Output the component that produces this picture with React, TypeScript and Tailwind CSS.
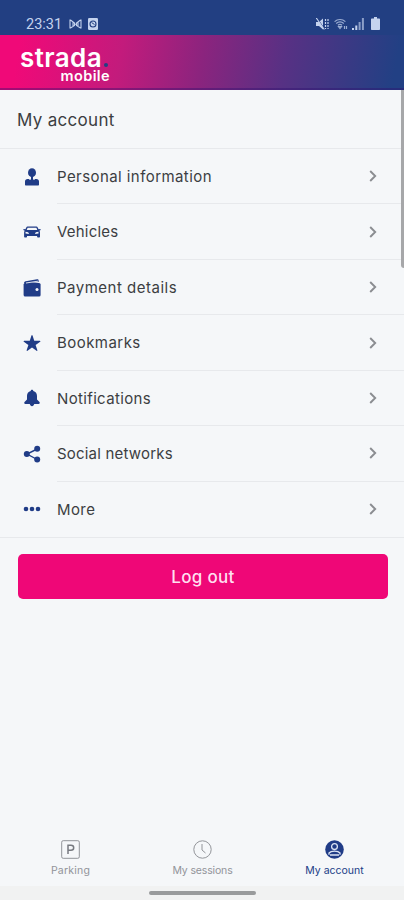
import { ReactNode } from "react";
import { IoStar } from "react-icons/io5";

interface MenuItem {
  label: string;
  icon: ReactNode;
  tracking: string;
}

function PersonIcon() {
  return (
    <svg width="16" height="18" viewBox="0 0 16 18" fill="currentColor">
      <ellipse cx="8" cy="4.7" rx="4" ry="4.4" />
      <path d="M7 8h2v4H7z" />
      <path d="M1 16.400v-3c0-1.500 1-2.400 2.600-2.400h1.200l1.200 1 1-.8h2l1 .8 1.200-1h1.200c1.600 0 2.600.9 2.600 2.400v3c0 .6-.4 1-1 1H2c-.6 0-1-.4-1-1z" />
    </svg>
  );
}

function CarIcon() {
  return (
    <svg width="18" height="14" viewBox="0 0 18 14" fill="currentColor">
      <path
        fillRule="evenodd"
        d="M4.600 1.500h8.800c.6 0 1.100.3 1.300.9l.9 1.900 1.800-.4.300 1.100-1.400.7c.5.500.7 1.100.7 1.800v4.300c0 .4-.3.700-.7.700h-1.500c-.4 0-.7-.3-.7-.7V10.900H4v.9c0 .4-.3.700-.7.700H1.800c-.4 0-.7-.3-.7-.7V7.500c0-.7.2-1.300.7-1.800L.3 5l.3-1.100 1.800.4.900-1.900c.2-.6.700-.9 1.300-.9zM4.600 2.700l-.9 2.200h10.600l-.9-2.200zM2.500 6.800v1.600l3.400.6c0-1.300-1.200-2.200-3.400-2.200zM15.500 6.800v1.600l-3.400.6c0-1.300 1.200-2.200 3.400-2.200z"
      />
    </svg>
  );
}

function WalletIcon() {
  return (
    <svg width="18" height="18" viewBox="0 0 18 18">
      <path d="M1 4.200c0-1 .6-1.800 1.700-2L14 .3c1-.2 1.800.4 1.800 1.400v1.200L2 4.800z" fill="currentColor" />
      <rect x=".6" y="4" width="17" height="13.500" rx="1.600" fill="currentColor" />
      <path d="M3 4l12.500-1.900" stroke="#f5f7f9" strokeWidth=".9" />
      <circle cx="14" cy="10.500" r="1.500" fill="#f5f7f9" />
    </svg>
  );
}

function BellIcon() {
  return (
    <svg width="18" height="18" viewBox="0 0 18 18" fill="currentColor">
      <path d="M9 .8c.7 0 1.300.500 1.300 1.200 2.500.6 3.700 2.500 3.700 5v3.500l2.500 2.600c.6.800.2 1.900-.8 1.900H2.300c-1 0-1.400-1.100-.8-1.900L4 10.500V7c0-2.500 1.200-4.400 3.700-5 0-.7.600-1.200 1.300-1.200zM6.700 14.800h4.600c-.3 1.700-1.200 2.400-2.300 2.400s-2-.7-2.300-2.400z" />
    </svg>
  );
}

function ShareIcon() {
  return (
    <svg width="18" height="18" viewBox="0 0 18 18" fill="currentColor">
      <path d="M14.200 4L4 9l10.200 5.500" fill="none" stroke="currentColor" strokeWidth="1.400" />
      <circle cx="14.200" cy="3.700" r="3" />
      <circle cx="3.800" cy="9" r="3" />
      <circle cx="14.200" cy="14.400" r="3" />
    </svg>
  );
}

function MoreIcon() {
  return (
    <svg width="18" height="6" viewBox="0 0 18 6" fill="currentColor">
      <circle cx="3" cy="3" r="2.300" />
      <circle cx="9" cy="3" r="2.300" />
      <circle cx="15" cy="3" r="2.300" />
    </svg>
  );
}

function ChevronIcon() {
  return (
    <svg width="8" height="12" viewBox="0 0 8 12" fill="none" stroke="#8b8d91" strokeWidth="1.900">
      <path d="M1.200 1l5 5-5 5" />
    </svg>
  );
}

const menuItems: MenuItem[] = [
  { label: "Personal information", icon: <PersonIcon />, tracking: "tracking-[0.43px]" },
  { label: "Vehicles", icon: <CarIcon />, tracking: "tracking-[0.2px]" },
  { label: "Payment details", icon: <WalletIcon />, tracking: "tracking-[0.5px]" },
  { label: "Bookmarks", icon: <IoStar size={18} />, tracking: "tracking-[0.45px]" },
  { label: "Notifications", icon: <BellIcon />, tracking: "tracking-[0.35px]" },
  { label: "Social networks", icon: <ShareIcon />, tracking: "tracking-[0.2px]" },
  { label: "More", icon: <MoreIcon />, tracking: "tracking-[0.4px]" },
];

function StatusBar() {
  return (
    <div className="flex h-[35px] shrink-0 items-end justify-between bg-[#223f82] pr-6 pl-[26px] pb-[5px] text-[#c5d3ee]">
      <div className="flex h-3 items-center">
        <span className="pt-px font-[Roboto,sans-serif] text-[14.5px] leading-4">23:31</span>
        {/* Bow-tie and app notification icons */}
        <svg className="ml-[7px]" width="13" height="12" viewBox="0 0 13 12" fill="none" stroke="currentColor" strokeWidth="1.100">
          <path d="M1 1.500v9M12 1.500v9M1.500 2l4 3v2.500l-4 2.500M11.500 2l-4 3v2.500l4 2.500M4 3.500v5M9 3.500v5M5 6.200h3" />
        </svg>
        <svg className="ml-[6px]" width="10" height="12" viewBox="0 0 10 12">
          <rect width="10" height="12" rx="1.200" fill="currentColor" />
          <circle cx="5" cy="6" r="3" fill="none" stroke="#223f82" strokeWidth="1.100" />
          <path d="M3.500 4.500l3 2" stroke="#223f82" />
        </svg>
      </div>
      <div className="flex items-center">
        <svg width="13" height="12" viewBox="0 0 13 12">
          <path d="M0 4h3l4-3.500v11L3 8H0z" fill="currentColor" />
          <path d="M1 0l7.500 11" stroke="#223f82" />
          <path d="M.3 0l8 11.500" stroke="currentColor" strokeWidth="1.100" />
          <path d="M9.500 1v10M12 1v10" stroke="currentColor" strokeWidth="1.200" strokeDasharray="2 1" />
        </svg>
        <svg className="ml-[5px] opacity-75" width="14" height="12" viewBox="0 0 14 12" fill="none" stroke="currentColor" strokeWidth="1.200">
          <path d="M.6 3.600c3-2.800 7.800-2.800 10.800 0M2.200 5.500c2.200-1.900 5.400-1.900 7.600 0M4 7.300c1.200-1 2.800-1 4 0" />
          <path d="M4.500 8.500h3L6 10.500zM10.500 8v3M12.500 8v3" />
        </svg>
        <svg className="ml-[4px]" width="12" height="12" viewBox="0 0 12 12" fill="currentColor">
          <path d="M0 10h2v2H0zM3.300 7.500h2V12h-2z" />
          <path d="M6.600 4h2v8h-2zM9.900 0h2v12h-2z" opacity=".65" />
        </svg>
        <svg className="ml-[7px]" width="9" height="13" viewBox="0 0 9 13" fill="currentColor">
          <path d="M3 0h3v1.500h2c.6 0 1 .4 1 1V12c0 .6-.4 1-1 1H1c-.6 0-1-.4-1-1V2.500c0-.6.4-1 1-1h2z" />
        </svg>
      </div>
    </div>
  );
}

function Logo() {
  return (
    <div className="w-[90px] text-white">
      <div className="flex h-[25px] items-center whitespace-nowrap text-[26px] leading-[25px] font-semibold tracking-[0.4px]">
        <span>strada</span>
        <span className="mt-[14px] ml-[2px] h-1 w-1 rounded-full bg-[#223f82]" />
      </div>
      <div className="-mt-px text-right text-[14.5px] leading-[14px] font-semibold tracking-[0.4px]">
        mobile
      </div>
    </div>
  );
}

function TabBar() {
  return (
    <nav className="grid h-[58px] grid-cols-[141px_123px_140px] text-[10.5px] leading-3 text-[#929499]">
      <a className="flex flex-col items-center pt-3">
        <svg width="19" height="19" viewBox="0 0 19 19" fill="none" stroke="currentColor">
          <rect x=".7" y=".7" width="17.600" height="17.600" rx="1.500" />
          <path d="M7 14V5.200h3c3.600 0 3.600 5 0 5H7" strokeWidth="1.500" stroke="#777a80" />
        </svg>
        <span className="mt-[6px] tracking-[0.2px]">Parking</span>
      </a>
      <a className="flex flex-col items-center pt-3">
        <svg width="19" height="19" viewBox="0 0 19 19" fill="none" stroke="currentColor">
          <circle cx="9.500" cy="9.500" r="8.700" />
          <path d="M9 4v6l3.500 3" />
        </svg>
        <span className="mt-[6px] tracking-[-0.15px]">My sessions</span>
      </a>
      <a className="flex flex-col items-center pt-3 pl-px text-[#203c87]">
        <svg width="19" height="19" viewBox="0 0 19 19">
          <circle cx="9.500" cy="9.500" r="9.300" fill="currentColor" />
          <g fill="none" stroke="#dce4f4" strokeWidth="1.300">
            <circle cx="9.500" cy="6.600" r="2.900" />
            <path d="M4 14.800V13c2-2.500 9-2.500 11 0v1.800M5 15h9" />
          </g>
        </svg>
        <span className="mt-[6px]">My account</span>
      </a>
    </nav>
  );
}

export default function App() {
  return (
    <div className="relative flex h-[900px] w-[404px] flex-col bg-[#f5f7f9] font-[Inter,sans-serif] text-[#3c3e42]">
      <StatusBar />
      <header className="h-[55px] shrink-0 border-b-2 border-[#30106f]/40 bg-[linear-gradient(100deg,#f00978_5%,#c31b7c_30%,#8b247e_50%,#573184_70%,#224084_97%)] bg-origin-border px-5 pt-[10px]">
        <Logo />
      </header>

      <main className="flex-1">
        <h1 className="flex h-[59px] items-center border-b border-[#e7e9ec] px-[17px] pt-[3px] text-[17px] tracking-[0.3px]">
          My account
        </h1>
        <ul className="border-b border-[#e7e9ec]">
          {menuItems.map((item, index) => (
            <li key={item.label} className="flex h-[55.45px] items-center">
              <span className="flex w-[57px] justify-center pr-[9px] pl-4 text-[#203c87]">{item.icon}</span>
              <div
                className={`flex h-full flex-1 items-center justify-between pr-[27px] ${
                  index < menuItems.length - 1 ? "border-b border-[#e7e9ec]" : ""
                }`}
              >
                <span className={`pt-[2px] text-[15px] ${item.tracking}`}>{item.label}</span>
                <ChevronIcon />
              </div>
            </li>
          ))}
        </ul>
        <button className="mt-4 ml-[18px] block h-[45px] w-[370px] rounded-[5px] bg-[#ef0777] pt-[2px] text-[17px] font-medium tracking-[0.3px] text-[#ffdff0]">
          Log out
        </button>
      </main>

      <TabBar />
      <div className="flex h-[14px] shrink-0 justify-center bg-[#f1f2f2] pt-[5px]">
        <div className="h-1 w-[107px] rounded-full bg-[#999b9c]" />
      </div>

      {/* Scroll indicator */}
      <div className="absolute top-[90px] right-0 h-[178px] w-[3px] rounded-bl-full bg-[#a6a7a9]" />
    </div>
  );
}
